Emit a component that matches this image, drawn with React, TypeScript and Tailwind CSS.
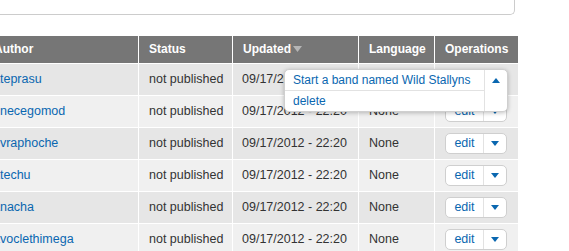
import React from 'react';

const rows = [
    { author: 'ateprasu' },
    { author: 'enecegomod' },
    { author: 'ovraphoche' },
    { author: 'atechu' },
    { author: 'anacha' },
    { author: 'avoclethimega' },
    { author: 'urapheno' },
];

const Caret = ({ up }: { up?: boolean }) => (
    <svg width="8" height="5" viewBox="0 0 8 5" className="block">
        {up ? <path d="M0 5 L4 0 L8 5 Z" fill="#0a67b0" /> : <path d="M0 0 L8 0 L4 5 Z" fill="#0a67b0" />}
    </svg>
);

const EditButton = () => (
    <div className="flex h-[21px] w-[62px] items-stretch rounded-[5px] border border-[#cfcfcf] bg-white">
        <span className="flex w-[37px] items-center justify-center text-[#0a67b0]">edit</span>
        <span className="flex flex-1 items-center justify-center border-l border-[#e2e2e2]">
            <Caret />
        </span>
    </div>
);

const OpenDropButton = () => (
    <div className="absolute right-[10px] top-[5px] z-10 flex h-[43px] w-[224px] rounded-[5px] border border-[#cfcfcf] bg-white text-[12px] shadow-[0_1px_4px_rgba(0,0,0,0.25)]">
        <div className="flex w-[199px] flex-col">
            <a className="flex h-[21px] items-center border-b border-[#e2e2e2] pl-[8px] text-[#0a67b0]">
                Start a band named Wild Stallyns
            </a>
            <a className="flex flex-1 items-center pl-[8px] text-[#0a67b0]">delete</a>
        </div>
        <div className="flex flex-1 justify-center border-l border-[#e2e2e2] pt-[8px]">
            <Caret up />
        </div>
    </div>
);

const App = () => {
    return (
        <div className="h-[251px] w-[569px] overflow-hidden bg-white font-['Liberation_Sans',Arial,sans-serif] text-[12.5px] text-[#333]">
            <div className="h-[15px] w-[515px] rounded-br-[5px] border-b border-r border-[#cccccc]" />
            <table className="ml-[-16px] mt-[21px] w-[534px] table-fixed border-collapse">
                <colgroup>
                    <col className="w-[154px]" />
                    <col className="w-[94px]" />
                    <col className="w-[126px]" />
                    <col className="w-[76px]" />
                    <col className="w-[84px]" />
                </colgroup>
                <thead>
                    <tr className="h-[27px] bg-[#767676] text-left text-[12px] font-bold text-white">
                        <th className="border-x border-white pl-[9px]">Author</th>
                        <th className="border-x border-white pl-[10px]">Status</th>
                        <th className="border-x border-white pl-[10px]">
                            <span className="inline-flex items-center gap-[2px]">
                                Updated
                                <svg width="9" height="6" viewBox="0 0 9 6">
                                    <path d="M0 0 L9 0 L4.5 6 Z" fill="#b5b5b5" />
                                </svg>
                            </span>
                        </th>
                        <th className="border-x border-white pl-[10px]">Language</th>
                        <th className="border-x border-white pl-[10px]">Operations</th>
                    </tr>
                </thead>
                <tbody>
                    {rows.map((row, i) => (
                        <tr
                            key={row.author}
                            className={`h-[32px] ${i % 2 === 0 ? 'bg-[#e6e6e6]' : 'bg-[#f0f0f0]'}`}
                        >
                            <td className="border border-white pl-[8px] whitespace-nowrap">
                                <a className="text-[#0a67b0]">{row.author}</a>
                            </td>
                            <td className="border border-white pl-[10px] whitespace-nowrap">not published</td>
                            <td className="border border-white pl-[9px] whitespace-nowrap">09/17/2012 - 22:20</td>
                            <td className="border border-white pl-[10px]">None</td>
                            <td className="relative overflow-visible border border-white pl-[10px]">
                                <EditButton />
                                {i === 0 && <OpenDropButton />}
                            </td>
                        </tr>
                    ))}
                </tbody>
            </table>
        </div>
    );
};

export default App;
